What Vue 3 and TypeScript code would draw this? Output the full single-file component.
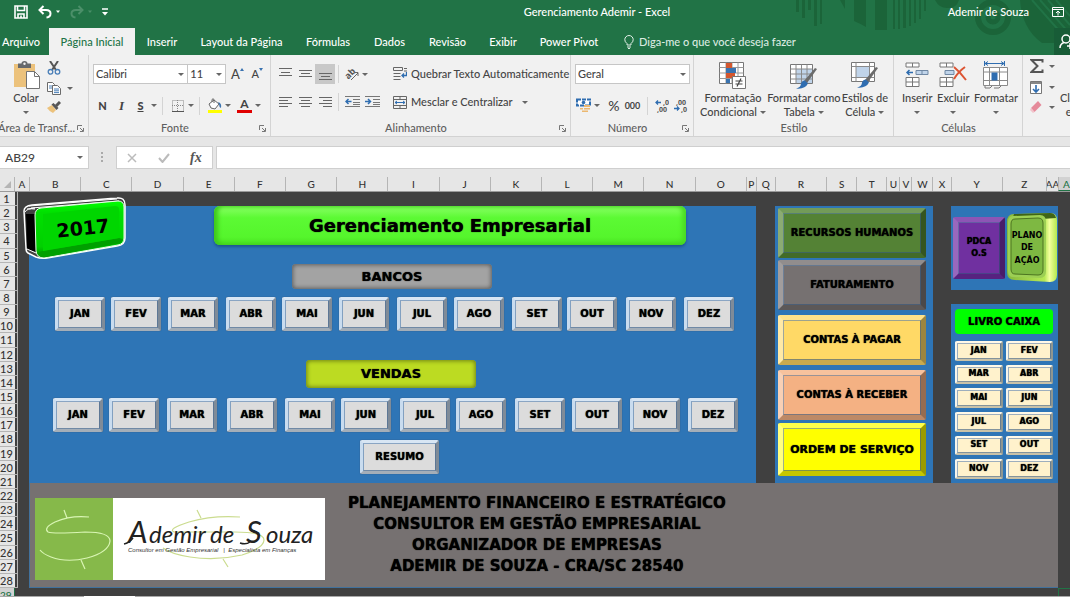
<script setup lang="ts">
import { ref } from 'vue'

interface Column { name: string; size: number; active?: boolean }
interface Area { label: string; kind: string }

const months: string[] = ['JAN', 'FEV', 'MAR', 'ABR', 'MAI', 'JUN', 'JUL', 'AGO', 'SET', 'OUT', 'NOV', 'DEZ']
const tabs: string[] = ['Arquivo', 'Página Inicial', 'Inserir', 'Layout da Página', 'Fórmulas', 'Dados', 'Revisão', 'Exibir', 'Power Pivot']
const activeTab = ref('Página Inicial')

const wide: Column[] = 'BCDEFGHIJKLMNO'.split('').map((name) => ({ name, size: 51 }))
const columns: Column[] = [
  { name: 'A', size: 14 },
  ...wide,
  { name: 'P', size: 10 },
  { name: 'Q', size: 19 },
  { name: 'R', size: 51 },
  { name: 'S', size: 30 },
  { name: 'T', size: 30 },
  { name: 'U', size: 13 },
  { name: 'V', size: 12 },
  { name: 'W', size: 21 },
  { name: 'X', size: 18 },
  { name: 'Y', size: 51 },
  { name: 'Z', size: 44 },
  { name: 'AA', size: 12 },
  { name: 'AB', size: 12, active: true },
]
const columnTracks = columns.map((c) => `minmax(0, ${c.size}fr)`).join(' ')

const areas: Area[] = [
  { label: 'RECURSOS HUMANOS', kind: 'rh' },
  { label: 'FATURAMENTO', kind: 'fat' },
  { label: 'CONTAS À PAGAR', kind: 'pagar' },
  { label: 'CONTAS À RECEBER', kind: 'receber' },
  { label: 'ORDEM DE SERVIÇO', kind: 'ordem' },
]
const slogan: string[] = [
  'PLANEJAMENTO FINANCEIRO E ESTRATÉGICO',
  'CONSULTOR EM GESTÃO EMPRESARIAL',
  'ORGANIZADOR DE EMPRESAS',
  'ADEMIR DE SOUZA - CRA/SC 28540',
]
const fontName = ref('Calibri')
const fontSize = ref('11')
const numberFormat = ref('Geral')
const cellName = ref('AB29')
const formula = ref('')
</script>

<template>
  <div class="app">
    <header class="top">
      <svg class="deco" width="290" height="55" viewBox="0 0 290 55" aria-hidden="true">
        <g fill="#1b6439">
          <path d="M16 0h3v12h-3zM22 0h3v18h-3zM28 0h3v10h-3zM34 0h3v26h-3zM40 0h2v24h-2zM60 0h5v9z" />
          <path d="M74 0h12v27q-7-4-12-6zM95 0h12v30h-12zM113 0h2v29h-2zM118 0h2v29h-2zM123 0h3v28h-3zM129 0h2v26h-2zM134 0h2v23h-2zM139 0h2v19h-2zM144 0h2v11h-2z" />
          <path d="M155 0h24q-3 9-12 8q-8 0-12-8z" />
          <path d="M240 0h50v43h-28q-20-14-22-43z" />
        </g>
        <g fill="none">
          <circle cx="213" cy="17" r="15" stroke="#1b6439" stroke-width="6" />
          <circle cx="213" cy="17" r="5" stroke="#1b6439" stroke-width="5" />
          <path d="M252 0l38 43M260 0l30 34M268 0l22 25M276 0l14 16" stroke="#217346" stroke-width="2" />
        </g>
      </svg>
      <div class="titlebar">
        <div class="quick">
          <button aria-label="Salvar">
            <svg width="14" height="14" viewBox="0 0 14 14"><path d="M1 1h12v12H1zM3.500 1v4.500h7V1M4 13V9h6v4M7 10.500V13" fill="none" stroke="#fff" stroke-width="1.600" /></svg>
          </button>
          <button aria-label="Desfazer">
            <svg width="22" height="14" viewBox="0 0 22 14"><path d="M5.500 1L1.500 5l4 4M2 5h6q4.500 0 4.500 3.500T8.500 12.500" fill="none" stroke="#fff" stroke-width="2" /><path d="M18 5.500h4l-2 2.500z" fill="#fff" /></svg>
          </button>
          <button aria-label="Refazer" disabled>
            <svg width="22" height="14" viewBox="0 0 22 14"><path d="M8.500 1l4 4-4 4M12 5H6Q1.500 5 1.500 8.500T5.500 12.500" fill="none" stroke="#4b8f69" stroke-width="2" /><path d="M18 5.500h4l-2 2.500z" fill="#4b8f69" /></svg>
          </button>
          <button aria-label="Personalizar acesso rápido">
            <svg width="6" height="8" viewBox="0 0 6 8"><path d="M0 1h6" stroke="#fff" stroke-width="1.500" /><path d="M0 4h6L3 7.500z" fill="#fff" /></svg>
          </button>
        </div>
        <h1>Gerenciamento Ademir - Excel</h1>
        <div class="user">
          <span>Ademir de Souza</span>
          <button aria-label="Opções de exibição da faixa">
            <svg width="12" height="10" viewBox="0 0 12 10"><path d="M.5.5h11v9H.5zM.5 2.500h11M6 8.500V4M4 6l2-2 2 2" fill="none" stroke="#fff" /></svg>
          </button>
        </div>
      </div>
      <nav class="tabs">
        <div class="tablist">
          <button v-for="t in tabs" :key="t" :class="{ on: t === activeTab }" @click="activeTab = t">{{ t }}</button>
        </div>
        <label class="tell">
          <svg width="10" height="14" viewBox="0 0 10 14"><path d="M3 10V8.500Q.8 7 .8 4.700A4.200 4.200 0 0 1 9.200 4.700Q9.200 7 7 8.500V10zM3 12h4M4 13.500h2" fill="none" stroke="#e3f0e8" /></svg>
          <input type="text" placeholder="Diga-me o que você deseja fazer" aria-label="Diga-me o que você deseja fazer" />
        </label>
        <button class="share" aria-label="Compartilhar">
          <svg width="14" height="15" viewBox="0 0 14 15"><circle cx="7" cy="5" r="4" fill="none" stroke="#fff" stroke-width="1.500" /><path d="M1 14q0-4 4-5.500M11 9v6M8 12h6" fill="none" stroke="#fff" stroke-width="1.500" /></svg>
        </button>
      </nav>
    </header>

    <section class="ribbon">
      <div class="group clip">
        <div class="clipbody">
          <button class="big paste">
            <svg width="26" height="28" viewBox="0 0 26 28"><path d="M0 3h21v23H0z" fill="#ecc27c" /><path d="M4 2.500h3.500q0-2.500 3-2.500t3 2.500H17V7H4z" fill="#66696c" /><circle cx="10.500" cy="2.800" r="1.200" fill="#f1f1f1" /><path d="M12.500 10.500h8l5 5v12h-13z" fill="#fff" stroke="#737373" /><path d="M20.500 10.500v5h5" fill="none" stroke="#737373" /></svg>
            <span>Colar</span><i class="arr"></i>
          </button>
          <div class="clipside">
            <button aria-label="Recortar">
              <svg width="14" height="14" viewBox="0 0 14 14"><path d="M3 0l6 9M11 0L5 9" stroke="#565656" stroke-width="2" /><circle cx="3.500" cy="10.800" r="2.300" fill="none" stroke="#4a7fb8" stroke-width="1.300" /><circle cx="10.500" cy="10.800" r="2.300" fill="none" stroke="#4a7fb8" stroke-width="1.300" /></svg>
            </button>
            <button aria-label="Copiar">
              <svg width="14" height="13" viewBox="0 0 14 13"><path d="M.5.5h5l2 2v7h-7z" fill="#fff" stroke="#6b6b6b" /><path d="M2 4h4M2 6h4" stroke="#4a7fb8" /><path d="M5.500 3.500h5l3 3v6h-8z" fill="#fff" stroke="#6b6b6b" /><path d="M7 7h5M7 8.800h5M7 10.600h5" stroke="#4a7fb8" /></svg>
              <i class="arr"></i>
            </button>
            <button aria-label="Pincel de formatação">
              <svg width="14" height="12" viewBox="0 0 14 12"><path d="M0 7l5-3 4 5-3 3q-3-1-6-5z" fill="#ecc27c" /><path d="M4.500 3.500l2-1.500 5 5-2 2z" fill="#565656" /><path d="M9 5l4-4" stroke="#565656" stroke-width="3" /></svg>
            </button>
          </div>
        </div>
        <footer><span>Área de Transf...</span><button class="launch" aria-label="Mais opções da área de transferência"><svg width="7" height="7" viewBox="0 0 7 7"><path d="M.5 5V.5H5M3 3l3 3M6.500 3v3.500H3" fill="none" stroke="#777" /></svg></button></footer>
      </div>

      <div class="group font">
        <div class="line">
          <span class="sel fname"><select v-model="fontName" aria-label="Fonte"><option>Calibri</option></select><i class="arr"></i></span>
          <span class="sel fsize"><select v-model="fontSize" aria-label="Tamanho"><option>11</option></select><i class="arr"></i></span>
          <button class="ic grow" aria-label="Aumentar fonte">A<svg width="4" height="3" viewBox="0 0 4 3"><path d="M0 3h4L2 0z" fill="#3a73b0" /></svg></button>
          <button class="ic shrink" aria-label="Diminuir fonte">A<svg width="4" height="3" viewBox="0 0 4 3"><path d="M0 0h4L2 3z" fill="#3a73b0" /></svg></button>
        </div>
        <div class="line">
          <button class="ic"><b>N</b></button>
          <button class="ic"><em>I</em></button>
          <button class="ic"><u>S</u></button>
          <i class="arr"></i><i class="sep"></i>
          <button class="ic" aria-label="Bordas"><svg width="12" height="12" viewBox="0 0 12 12"><path d="M.5.5h11v11H.5zM5.500 0v12M0 5.500h12" fill="none" stroke="#888" stroke-dasharray="1 1" /><path d="M0 11.500h12" stroke="#555" /></svg></button>
          <i class="arr"></i><i class="sep"></i>
          <button class="ic" aria-label="Cor de preenchimento"><svg width="16" height="15" viewBox="0 0 16 15"><path d="M2 6l5-4 5 4-4 5-4-1z" fill="#fff" stroke="#666" /><path d="M7 5V1.500q-1-1.500-2 0V4" fill="none" stroke="#666" /><path d="M11 4q4 1 3 6-2-1-2-4z" fill="#3a73b0" /><path d="M1 12h14v3H1z" fill="#ffff00" /></svg></button>
          <i class="arr"></i>
          <button class="ic" aria-label="Cor da fonte"><span class="fc">A</span></button>
          <i class="arr"></i>
        </div>
        <footer><span>Fonte</span><button class="launch" aria-label="Mais opções de fonte"><svg width="7" height="7" viewBox="0 0 7 7"><path d="M.5 5V.5H5M3 3l3 3M6.500 3v3.500H3" fill="none" stroke="#777" /></svg></button></footer>
      </div>

      <div class="group align">
        <div class="alignbody">
          <div>
            <div class="line">
              <button class="al" aria-label="Alinhar acima"><svg width="13" height="12" viewBox="0 0 13 12"><path d="M0 .5h13M2 4.500h9M0 7.500h13" stroke="#666" /></svg></button>
              <button class="al" aria-label="Alinhar no meio"><svg width="13" height="12" viewBox="0 0 13 12"><path d="M0 2.500h13M2 5.500h9M0 8.500h13" stroke="#666" /></svg></button>
              <button class="al on" aria-label="Alinhar abaixo"><svg width="13" height="12" viewBox="0 0 13 12"><path d="M0 5.500h13M2 8.500h9M0 11.500h13" stroke="#666" /></svg></button>
              <i class="sep"></i>
              <button class="al" aria-label="Orientação"><svg width="15" height="14" viewBox="0 0 15 14"><text x="0" y="9" transform="rotate(-45 6 7)" font-size="9" font-weight="700" font-family="Open Sans, sans-serif" fill="#555">ab</text><path d="M6 13l7-7M13 9V5.500H9.500" fill="none" stroke="#666" /></svg></button>
              <i class="arr"></i>
            </div>
            <div class="line">
              <button class="al" aria-label="Alinhar à esquerda"><svg width="13" height="11" viewBox="0 0 13 11"><path d="M0 .5h13M0 3.500h9M0 6.500h13M0 9.500h9" stroke="#666" /></svg></button>
              <button class="al" aria-label="Centralizar"><svg width="13" height="11" viewBox="0 0 13 11"><path d="M0 .5h13M2 3.500h9M0 6.500h13M2 9.500h9" stroke="#666" /></svg></button>
              <button class="al" aria-label="Alinhar à direita"><svg width="13" height="11" viewBox="0 0 13 11"><path d="M0 .5h13M4 3.500h9M0 6.500h13M4 9.500h9" stroke="#666" /></svg></button>
              <i class="sep"></i>
              <button class="al" aria-label="Diminuir recuo"><svg width="15" height="12" viewBox="0 0 15 12"><path d="M0 .5h15M8 3.500h7M8 6.500h7M0 10.500h15M8 8.500h7" stroke="#777" /><path d="M6.500 5.500H1M3.500 3L1 5.500 3.500 8" fill="none" stroke="#2f6db0" stroke-width="1.500" /></svg></button>
              <button class="al" aria-label="Aumentar recuo"><svg width="15" height="12" viewBox="0 0 15 12"><path d="M0 .5h15M8 3.500h7M8 6.500h7M0 10.500h15M8 8.500h7" stroke="#777" /><path d="M0 5.500h5.500M3 3l2.500 2.500L3 8" fill="none" stroke="#2f6db0" stroke-width="1.500" /></svg></button>
            </div>
          </div>
          <i class="vline"></i>
          <div>
            <div class="line">
              <button class="txt"><svg width="14" height="14" viewBox="0 0 14 14"><path d="M.5.5h9v3h-9zM.5 6.500h7M.5 9.500h7M.5 12.500h7M11 1.500h3M11 4h3" fill="none" stroke="#666" /><path d="M13.500 5v3.500H9M11 6.500l-2 2 2 2" fill="none" stroke="#2f6db0" stroke-width="1.300" /></svg>Quebrar Texto Automaticamente</button>
            </div>
            <div class="line">
              <button class="txt"><svg width="14" height="13" viewBox="0 0 14 13"><path d="M.5.5h13v12H.5zM.5 3.500h13M.5 9.500h13M7 .5v3M7 9.500v3" fill="none" stroke="#666" /><path d="M2 6.500h10M4 5L2 6.500 4 8M10 5l2 1.500L10 8" fill="none" stroke="#2f6db0" /></svg>Mesclar e Centralizar<i class="arr"></i></button>
            </div>
          </div>
        </div>
        <footer><span>Alinhamento</span><button class="launch" aria-label="Mais opções de alinhamento"><svg width="7" height="7" viewBox="0 0 7 7"><path d="M.5 5V.5H5M3 3l3 3M6.500 3v3.500H3" fill="none" stroke="#777" /></svg></button></footer>
      </div>

      <div class="group number">
        <div class="line"><span class="sel fnum"><select v-model="numberFormat" aria-label="Formato de número"><option>Geral</option></select><i class="arr"></i></span></div>
        <div class="line">
          <button class="ic" aria-label="Formato de contabilização"><svg width="16" height="15" viewBox="0 0 16 15"><path d="M1 1.500h13v6H1z" fill="#fff" stroke="#2f6db0" stroke-width="2" stroke-dasharray="4 1" /><circle cx="7.500" cy="4.500" r="1.800" fill="#2f6db0" /><path d="M8 7h6v2H8zM8 10h6v1.500H8zM4 10h3v1.500H4zM6 12.500h6V14H6z" fill="#ecb870" /></svg></button>
          <i class="arr"></i>
          <button class="ic pct">%</button>
          <button class="ic zeros">000</button>
          <i class="sep"></i>
          <button class="ic" aria-label="Aumentar casas decimais"><svg width="14" height="14" viewBox="0 0 14 14"><path d="M6 3.500H1M3 1.500l-2 2 2 2" fill="none" stroke="#2f6db0" stroke-width="1.300" /><text x="8" y="6" class="mini">,0</text><text x="2" y="13" class="mini">,00</text></svg></button>
          <button class="ic" aria-label="Diminuir casas decimais"><svg width="14" height="14" viewBox="0 0 14 14"><path d="M0 9.500h5M3 7.500l2 2-2 2" fill="none" stroke="#2f6db0" stroke-width="1.300" /><text x="2" y="6" class="mini">,00</text><text x="7" y="13" class="mini">,0</text></svg></button>
        </div>
        <footer><span>Número</span><button class="launch" aria-label="Mais opções de número"><svg width="7" height="7" viewBox="0 0 7 7"><path d="M.5 5V.5H5M3 3l3 3M6.500 3v3.500H3" fill="none" stroke="#777" /></svg></button></footer>
      </div>

      <div class="group style">
        <div class="bigs">
          <button class="big">
            <svg width="27" height="28" viewBox="0 0 27 28"><path d="M.5 1.500h24v21H.5z" fill="#fff" stroke="#777" /><path d="M.5 6.500h24M.5 12h24M.5 17.500h24M7 1.500v21M13 1.500v21M19 1.500v21" stroke="#999" /><path d="M7 2h6v5H7zM7 12h9v5H7z" fill="#d3572f" /><path d="M7 7h10v5H7z" fill="#3a73b0" /><path d="M7 18h4v4H7z" fill="#3a73b0" /><path d="M13.500 15.500h13v12h-13z" fill="#fff" stroke="#777" /><path d="M16.500 20h7M16.500 23h7M22 17.500l-4 8" stroke="#444" stroke-width="1.200" /></svg>
            <span>Formatação</span><span>Condicional<i class="arr"></i></span>
          </button>
          <button class="big">
            <svg width="28" height="28" viewBox="0 0 28 28"><path d="M.5 3.500h22v19H.5z" fill="#fff" stroke="#777" /><path d="M6 8h16v14H6z" fill="#c0d4ea" /><path d="M.5 8h22M.5 13h22M.5 18h22M6 3.500v19M11.500 3.500v19M17 3.500v19" stroke="#8a8a8a" /><path d="M27 8l-2-1-11 13 3 2z" fill="#6b6b6b" /><path d="M15 19.500l3 3q-3 6-12 5 5-1 5-5 1-3 4-3z" fill="#2f6db0" /></svg>
            <span>Formatar como</span><span>Tabela<i class="arr"></i></span>
          </button>
          <button class="big">
            <svg width="28" height="28" viewBox="0 0 28 28"><path d="M.5 1.500h23v19H.5z" fill="#fff" stroke="#777" /><path d="M5 6h13v10H5z" fill="#c0d4ea" /><path d="M.5 5.500h23M.5 16.500h23M5 1.500v19M18.500 1.500v19" stroke="#8a8a8a" /><path d="M27 7l-2-1-11 13 3 2z" fill="#6b6b6b" /><path d="M15 18.500l3 3q-3 6-12 5 5-1 5-5 1-3 4-3z" fill="#2f6db0" /></svg>
            <span>Estilos de</span><span>Célula<i class="arr"></i></span>
          </button>
        </div>
        <footer><span>Estilo</span></footer>
      </div>

      <div class="group cells">
        <div class="bigs">
          <button class="big">
            <svg width="24" height="28" viewBox="0 0 24 28"><path d="M1 2h13v4H1zM7.500 2v4M1 16.500h13v9H1zM1 21h13M7.500 16.500v9" fill="#fff" stroke="#777" /><path d="M11 9.500h12v4H11zM17 9.500v4" fill="#c0d4ea" stroke="#6f87a3" /><path d="M8 11.500H2M4.500 9L2 11.500 4.500 14" fill="none" stroke="#2f6db0" stroke-width="1.500" /></svg>
            <span>Inserir</span><span><i class="arr"></i></span>
          </button>
          <button class="big">
            <svg width="28" height="28" viewBox="0 0 28 28"><path d="M1 2h13v4H1zM7.500 2v4M1 16.500h13v9H1zM1 21h13M7.500 16.500v9" fill="#fff" stroke="#777" /><path d="M6 9.500h9v4H6z" fill="#c0d4ea" stroke="#6f87a3" /><path d="M15 6q6 5 12 13M26 6q-7 5-11 12" fill="none" stroke="#dc5432" stroke-width="2" /></svg>
            <span>Excluir</span><span><i class="arr"></i></span>
          </button>
          <button class="big">
            <svg width="27" height="28" viewBox="0 0 27 28"><path d="M2.500 0v5M22.500 0v5M3 2.500h19M6 .5l-3 2 3 2M19 .5l3 2-3 2" fill="none" stroke="#2f6db0" /><path d="M1.500 6.500h24v18h-24zM1.500 11h24M1.500 19.500h24M7.500 6.500v18M17.500 6.500v18" fill="#fff" stroke="#8a8a8a" /><path d="M9.500 11.500h6v8h-6z" fill="#2f6db0" /><path d="M3 25v2h5l2-2M12 27h5l2-2" fill="none" stroke="#777" /></svg>
            <span>Formatar</span><span><i class="arr"></i></span>
          </button>
        </div>
        <footer><span>Células</span></footer>
      </div>

      <div class="group edit">
        <div class="editicons">
          <button aria-label="Soma"><svg width="14" height="14" viewBox="0 0 14 14"><path d="M12.500 3.500V1H1.500l6 6-6 6h11v-2.500" fill="none" stroke="#555" stroke-width="2" /></svg><i class="arr"></i></button>
          <button aria-label="Preencher"><svg width="12" height="13" viewBox="0 0 12 13"><path d="M.5.5h11v12H.5z" fill="#fff" stroke="#777" /><path d="M1 1h10v2H1z" fill="#888" /><path d="M6 4v7M3 8l3 3 3-3" fill="none" stroke="#2f6db0" stroke-width="1.600" /></svg><i class="arr"></i></button>
          <button aria-label="Limpar"><svg width="12" height="12" viewBox="0 0 12 12"><path d="M8 0l3.500 4-7 7L1 7z" fill="#e58a9a" /><path d="M1 7l3.500 4-1.500 1-3-3z" fill="#f2c2ca" /></svg><i class="arr"></i></button>
        </div>
        <button class="big cut"><span>Classificar</span><span>e Filtrar</span></button>
      </div>
    </section>

    <section class="formula">
      <label class="namebox"><input v-model="cellName" type="text" aria-label="Caixa de nome" /><i class="arr"></i></label>
      <svg class="dots" width="2" height="11" viewBox="0 0 2 11"><path d="M0 0h2v2H0zM0 4h2v2H0zM0 8h2v2H0z" fill="#aaa" /></svg>
      <div class="fxbox">
        <button aria-label="Cancelar"><svg width="10" height="10" viewBox="0 0 10 10"><path d="M1 1l8 8M9 1L1 9" stroke="#bbb" stroke-width="1.500" /></svg></button>
        <button aria-label="Inserir"><svg width="12" height="10" viewBox="0 0 12 10"><path d="M1 5l3.500 4L11 1" fill="none" stroke="#bbb" stroke-width="2" /></svg></button>
        <button class="fx"><em>fx</em></button>
      </div>
      <input v-model="formula" class="fxinput" type="text" aria-label="Barra de fórmulas" />
    </section>

    <main class="sheet">
      <div class="cols">
        <div class="corner"><svg width="7" height="7" viewBox="0 0 7 7"><path d="M7 0v7H0z" fill="#b5b5b5" /></svg></div>
        <div class="letters" :style="{ gridTemplateColumns: columnTracks }">
          <span v-for="c in columns" :key="c.name" :class="{ active: c.active }">{{ c.name }}</span>
        </div>
      </div>

      <div class="body">
        <div class="rows"><span v-for="n in 28" :key="n">{{ n }}</span></div>
        <div class="board">
          <section class="panel main">
            <button class="year" aria-label="2017">
              <svg width="104" height="64" viewBox="0 0 104 64">
                <defs><linearGradient id="yg" x1="0" y1="0" x2="0" y2="1"><stop offset="0" stop-color="#00ff00" /><stop offset=".2" stop-color="#00e000" /><stop offset=".8" stop-color="#00d000" /><stop offset="1" stop-color="#008a00" /></linearGradient></defs>
                <path d="M9 8L94 1q8-1 8 7v33q0 7-8 8L24 61q-6 1-11-1l-8-4q-2-1-2-5L1 14q0-5 8-6z" fill="#404040" stroke="#fff" stroke-width="1.500" />
                <path d="M3 17h9l1 38-9-3z" fill="#000" />
                <path d="M2 15q2-4 10-3M4 52l9 4M4 12l8-1M6 9l88-7M8 11l88-7" stroke="#fff" fill="none" />
                <path d="M18 11L95 4q6 0 6 6v31q0 6-6 7L21 61q-7 0-8-7l-1-36q0-6 6-7z" fill="url(#yg)" stroke="#e8ffe8" />
                <path d="M19 54L96 41l4 1q-1 5-6 5L22 60q-5 0-8-4z" fill="#00a000" />
                <path d="M20 17L92 9q4 0 4 3v29l-76 13z" fill="#00d600" />
                <text x="60" y="38" transform="rotate(-6 60 32)" text-anchor="middle" class="yeartext">2017</text>
              </svg>
            </button>
            <h2 class="heading">Gerenciamento Empresarial</h2>
            <h3 class="tag bancos">BANCOS</h3>
            <div class="months b"><button v-for="m in months" :key="m" class="bevel silver">{{ m }}</button></div>
            <h3 class="tag vendas">VENDAS</h3>
            <div class="months v"><button v-for="m in months" :key="m" class="bevel silver">{{ m }}</button></div>
            <button class="bevel silver resumo">RESUMO</button>
          </section>

          <section class="panel areas">
            <button v-for="a in areas" :key="a.kind" class="bevel area" :class="a.kind">{{ a.label }}</button>
          </section>

          <div class="right">
            <section class="panel plans">
              <button class="bevel pdca"><span>PDCA</span><span>O.S</span></button>
              <button class="plano" aria-label="Plano de ação">
                <svg width="52" height="72" viewBox="0 0 52 72">
                  <defs><linearGradient id="pg" x1="0" y1="0" x2="1" y2="0"><stop offset="0" stop-color="#86b83c" /><stop offset=".75" stop-color="#b6e854" /><stop offset=".85" stop-color="#f2ff9c" /><stop offset="1" stop-color="#b4e84e" /></linearGradient></defs>
                  <path d="M8 2L44 1q7 0 7 7v55q0 7-7 7L9 68q-8 0-8-8V10q0-8 7-8z" fill="url(#pg)" />
                  <path d="M8 2L44 1q5 0 6 5L36 7q-2-3-5-3L7 5z" fill="#3f6416" />
                  <path d="M7 4L34 3q6 0 6 7v49q0 7-6 7L7 65q-5 0-5-6V10q0-6 5-6z" fill="#9ccf54" />
                  <path d="M9 7l23-1q5 0 5 5v47q0 5-5 5L9 62q-4 0-4-5V12q0-5 4-5z" fill="#7eb842" stroke="#4c7420" />
                  <text text-anchor="middle" class="planotext"><tspan x="21" y="26">PLANO</tspan><tspan x="21" y="38">DE</tspan><tspan x="21" y="51">AÇÃO</tspan></text>
                </svg>
              </button>
            </section>
            <section class="panel cash">
              <h3>LIVRO CAIXA</h3>
              <div class="cashgrid"><button v-for="m in months" :key="m" class="bevel cream">{{ m }}</button></div>
            </section>
          </div>

          <section class="brand">
            <svg class="logo" width="290" height="82" viewBox="0 0 290 82" role="img" aria-label="Ademir de Souza">
              <path d="M0 0h290v82H0z" fill="#fff" /><path d="M0 0h78v82H0z" fill="#86b94a" />
              <path d="M54 19Q36 17 20 24Q8 30 13 34Q18 36 50 34Q75 34 75 43Q74 54 52 60Q32 65 16 59Q8 56 5 52M29 12l3 8M46 62l4 9" fill="none" stroke="#d9f5b4" stroke-width="1.200" />
              <path d="M205 19Q178 17 154 24Q132 31 139 34L200 34Q229 34 229 42Q229 50 207 57Q181 63 155 59Q136 56 128 50M162 12l4 8M188 61l5 8" fill="none" stroke="#cbdc8f" stroke-width="1.200" />
              <text y="45" class="script"><tspan x="93" class="cap">A</tspan><tspan x="114">demir</tspan><tspan x="175">de</tspan><tspan x="211" class="cap">S</tspan><tspan x="231">ouza</tspan></text>
              <path d="M89 46q5-1 9-6M205 45q6 2 10-1" fill="none" stroke="#222" stroke-width="1.500" />
              <text x="93" y="54" class="sub">Consultor em Gestão Empresarial&nbsp;&nbsp; |&nbsp; Especialista em Finanças</text>
            </svg>
            <div class="slogan"><p v-for="s in slogan" :key="s">{{ s }}</p></div>
          </section>
        </div>
      </div>

      <div class="tail"><span class="row29">29</span><span class="dark"></span><span class="cursor"></span></div>
      <div class="strip"><span></span></div>
    </main>
  </div>
</template>

<style>
body { background: #404040; overflow: hidden; }
</style>

<style scoped>
* { box-sizing: border-box; }
.app { height: 100vh; min-height: 597px; display: flex; flex-direction: column; overflow: hidden; font: 500 11px/14px Lato, "Open Sans", sans-serif; color: #444; }
button { font: inherit; color: inherit; border: 0; padding: 0; background: none; white-space: nowrap; display: flex; align-items: center; justify-content: center; }
input, select { font: inherit; color: inherit; border: 0; outline: 0; min-width: 0; }
h1, h2, h3, p { margin: 0; font: inherit; }
svg { display: block; flex: none; }
.arr { flex: none; display: block; width: 0; height: 0; border: 3px solid transparent; border-top-color: #666; border-bottom: 0; }

.top { position: relative; background: #217346; color: #fff; }
.deco { position: absolute; right: 0; top: 0; }
.titlebar { position: relative; height: 28px; display: grid; grid-template-columns: 1fr auto 1fr; align-items: center; padding: 0 6px 4px 14px; }
.quick { display: flex; align-items: center; gap: 10px; }
.titlebar h1 { padding-left: 116px; }
.user { display: flex; align-items: center; justify-content: flex-end; gap: 23px; }
.tabs { position: relative; height: 27px; display: flex; }
.tablist { display: grid; grid-template-columns: 49px 86px 54px 105px 68px 55px 61px 50px 82px; }
.tablist button:first-child { padding-right: 7px; }
.tablist .on { background: #f1f1f1; color: #217346; }
.tell { display: flex; align-items: center; gap: 5px; padding-left: 14px; flex: 1; color: #e3f0e8; }
.tell input { width: 200px; background: none; padding: 0; }
.tell input::placeholder { color: #dbeae1; opacity: 1; }
.share { width: 16px; background: #185c37; overflow: hidden; justify-content: flex-start; padding-left: 5px; }

.ribbon { height: 82px; background: #f1f1f1; border-bottom: 1px solid #d2d2d2; display: flex; overflow: hidden; }
.group { flex: none; position: relative; border-right: 1px solid #d4d4d4; padding: 8px 3px 0 4px; display: flex; flex-direction: column; justify-content: space-between; }
.group footer { height: 16px; display: flex; align-items: center; color: #5f5f5f; }
.group footer span { flex: 1; text-align: center; white-space: nowrap; }
.launch { width: 10px; }
.clip { width: 89px; padding-left: 0; }
.font { width: 182px; padding-left: 4px; }
.align { width: 300px; }
.number { width: 123px; padding-left: 4px; }
.style { width: 200px; }
.cells { width: 129px; }
.edit { width: 96px; flex-direction: row; justify-content: flex-start; gap: 7px; border: 0; padding: 4px 0 0 7px; }
.line { height: 22px; display: flex; align-items: center; }
.line + .line { margin-top: 6px; }
.clipbody { display: flex; gap: 7px; margin-top: -2px; height: 58px; }
.clip footer span { text-align: left; margin-left: -2px; }
.big { flex-direction: column; justify-content: flex-start; align-items: center; }
.big svg { margin-bottom: 2px; height: 28px; }
.big span { display: flex; align-items: center; gap: 3px; height: 14px; line-height: 14px; }
.paste { width: 40px; margin-left: 6px; }
.paste .arr { margin-top: 6px; }
.paste svg { margin-left: 2px; }
.clipside { display: flex; flex-direction: column; justify-content: space-between; height: 52px; margin-left: -6px; }
.clipside button { gap: 6px; justify-content: flex-start; }
.sel { position: relative; display: flex; height: 20px; }
.sel select { appearance: none; width: 100%; background: #fff; border: 1px solid #c6c6c6; padding: 0 2px; }
.sel .arr { position: absolute; right: 4px; top: 9px; }
.fname { width: 97px; }
.fsize { width: 39px; margin-left: -1px; }
.fnum { width: 116px; }
.ic { width: 19px; height: 20px; }
.grow, .shrink { align-items: center; width: 20px; }
.grow { font-size: 13px; margin-left: 2px; }
.grow svg, .shrink svg { margin-bottom: 9px; }
.ic b { font-weight: 900; }
.ic em { font-family: "Liberation Serif", serif; font-size: 13px; font-weight: 700; }
.ic u { font-weight: 900; }
.sep { flex: none; width: 1px; height: 18px; background: #d4d4d4; margin: 0 5px; }
.fc { font-weight: 700; font-size: 12px; line-height: 12px; border-bottom: 3px solid #e00000; padding: 0 3px; }
.font .ic + .arr { margin-left: 1px; }
.font .ic + .arr + .ic { margin-left: 4px; }
.alignbody { display: flex; gap: 6px; }
.al { width: 20px; height: 20px; }
.al.on { background: #c8c8c8; }
.alignbody .sep { margin: 0 3px; }
.vline { width: 1px; height: 48px; background: #d8d8d8; margin-left: -1px; }
.txt { gap: 4px; }
.txt .arr { margin-left: 5px; }
.pct { font-size: 14px; margin-left: 5px; }
.zeros { font-size: 9px; font-weight: 700; }
.mini { font: 700 7px "Open Sans", sans-serif; fill: #555; }
.bigs { display: flex; justify-content: space-between; margin-top: -2px; height: 58px; }
.cells .bigs { padding: 0 1px 0 4px; }
.style .bigs { padding: 0 2px; }
.editicons { display: flex; flex-direction: column; justify-content: space-between; height: 54px; }
.editicons button { width: 25px; justify-content: space-between; }
.cut { padding-top: 32px; align-items: center; margin-left: -2px; }

.formula { height: 40px; flex: none; background: #e6e6e6; display: flex; align-items: flex-start; padding-top: 9px; font-size: 12px; }
.namebox, .fxbox, .fxinput { height: 23px; background: #fff; border: 1px solid #cfcfcf; display: flex; align-items: center; }
.namebox { width: 89px; border-left: 0; padding: 0 5px; }
.namebox input { flex: 1; padding: 0; }
.dots { margin: 6px 13px 0 12px; }
.fxbox { width: 97px; justify-content: space-around; }
.fx { font: 700 14px/16px "Liberation Serif", serif; color: #555; }
.fxinput { flex: 1; margin-left: 3px; border-right: 0; }

.sheet { flex: 1; display: flex; flex-direction: column; background: #404040; min-height: 0; }
.cols { height: 15px; flex: none; display: flex; background: #e6e6e6; border-bottom: 1px solid #9a9a9a; color: #333; }
.corner { width: 15px; display: flex; align-items: flex-end; justify-content: flex-end; padding: 0 3px 3px 0; border-right: 1px solid #b5b5b5; }
.letters { flex: 1; display: grid; font-size: 10px; line-height: 14px; }
.letters span { text-align: center; border-left: 1px solid #b5b5b5; overflow: hidden; display: flex; justify-content: center; }
.letters span:first-child { border-left: 0; }
.letters .active { background: #d2d2d2; color: #217346; border-bottom: 1px solid #217346; justify-content: flex-start; padding-left: 4px; }
.body { display: flex; flex: none; }
.rows { width: 15px; flex: none; background: #e6e6e6; display: grid; grid-template-rows: repeat(28, minmax(0, 1fr)); font-size: 11px; line-height: 13px; color: #333; }
.rows span { display: flex; justify-content: center; padding-right: 4px; border-bottom: 1px solid #b5b5b5; border-right: 1px solid #b5b5b5; }
.board { flex: 1; padding-top: 14px; display: grid; grid-template-columns: 14fr 727fr 19fr 158fr 18fr 107fr 12fr; grid-template-rows: auto auto; font-family: "DejaVu Sans", "Liberation Sans", sans-serif; font-weight: 700; color: #000; text-shadow: 0 0 1px #000; }
.panel { background: #2e75b6; }
.main { grid-column: 2; position: relative; height: 277px; display: flex; flex-direction: column; align-items: flex-start; }
.year { position: absolute; left: -6px; top: -9px; }
.yeartext { font: 700 19px "DejaVu Sans", sans-serif; }
.heading { width: 472px; height: 39px; margin-left: 185px; border-radius: 6px; font-size: 18px; font-weight: 700; display: flex; align-items: center; justify-content: center; background: linear-gradient(#8aff66, #5cfa34 30%, #55f52c 80%, #48e020); box-shadow: inset 4px 0 4px #3fc81c, inset -4px 0 4px #4bdc24, 0 2px 3px #1d568c; }
.tag { display: flex; align-items: center; justify-content: center; border-radius: 4px; font-size: 13px; font-weight: 700; }
.bancos { width: 200px; height: 25px; margin: 19px 0 0 263px; background: #a3a3a3; box-shadow: inset 0 0 4px 1px #5c5c5c; }
.vendas { width: 170px; height: 28px; margin: 29px 0 0 277px; background: #bcdb22; box-shadow: inset 0 0 4px 1px #6d8112; }
.months { display: grid; }
.months.b { margin: 8px 0 0 26px; grid-template-columns: 56px 57px 58px 56px 57px 58px 57px 58px 55px 59px 58px 50px; }
.months.v { margin: 10px 0 0 24px; grid-template-columns: 56px 58px 60px 58px 56px 59px 56px 59px 57px 58px 58px 50px; }
.bevel { border: 4px solid; font-weight: 700; border-radius: 2px; outline: 1px solid rgba(60, 100, 145, .5); outline-offset: -4px; text-shadow: inherit; }
.silver { width: 50px; height: 34px; background: #dcdcdc; border-color: #d8e6f4 #7f8b98 #a4aeb8 #c9dcef; font-size: 10px; box-shadow: 0 0 1px #345; }
.resumo { width: 79px; margin: 8px 0 0 331px; }
.areas { grid-column: 4; padding: 2px 7px 0 3px; display: grid; grid-template-rows: 52px 55px 55px 53px 53px; align-content: start; }
.area { height: 50px; border-width: 6px; outline-offset: -6px; font-size: 10px; }
.rh { background: #548235; border-color: #739b59 #35551f #426b28 #8bab73; }
.fat { background: #767171; border-color: #918d8d #4b4848 #5c5858 #a19d9d; }
.pagar { background: #ffd966; border-color: #ffe28a #9c853f #c9aa4d #ffe9a6; }
.receber { background: #f4b183; border-color: #f7c29d #966c50 #bd8966 #f8d0b5; }
.ordem { height: 53px; background: #ffff00; border-color: #ffff4a #9b9b00 #c7c700 #ffff80; font-size: 11px; }
.right { grid-column: 6; display: flex; flex-direction: column; gap: 14px; }
.plans { height: 84px; display: flex; align-items: center; justify-content: space-between; padding-left: 2px; }
.pdca { flex-direction: column; width: 52px; height: 62px; border-width: 6px; outline-offset: -6px; background: #7030a0; border-color: #8d55b5 #481c69 #572280 #9868bd; font-size: 8px; line-height: 12px; }
.planotext { font: 700 8px "DejaVu Sans", sans-serif; }
.cash { flex: 1; padding: 5px 5px 4px 4px; display: flex; flex-direction: column; }
.cash h3 { height: 25px; border-radius: 4px; background: #00ff00; font-size: 10px; font-weight: 700; display: flex; align-items: center; justify-content: center; }
.cashgrid { flex: 1; margin-top: 7px; display: grid; grid-template-columns: 1fr 1fr; gap: 4px 3px; }
.cream { border-width: 3px; outline-offset: -3px; background: #fff2cc; border-color: #fff9e8 #8f9690 #c9c2a8 #f6f5ec; font-size: 8px; line-height: 10px; }
.brand { grid-column: 2 / 7; height: 105px; background: #767171; border: solid #41719c; border-width: 0 0 1px 1px; display: flex; align-items: center; padding: 8px 0 0 5px; }
.slogan { margin: 0 0 8px 23px; font-size: 15px; line-height: 21px; text-align: center; }
.slogan p { font-weight: 700; }
.logo { text-shadow: none; }
.script { font: italic 400 24px Lato, sans-serif; fill: #222; }
.cap { font-size: 31px; }
.sub { font: italic 400 6px "Liberation Sans", sans-serif; fill: #333; }
.tail { flex: 1; min-height: 0; display: flex; overflow: hidden; }
.row29 { width: 15px; background: #d2d2d2; color: #217346; border-right: 1px solid #217346; font-size: 10px; line-height: 14px; }
.dark { flex: 1; }
.cursor { width: 12px; border: solid #217346; border-width: 1px 0 0 1px; }
.strip { height: 1px; flex: none; background: #a8a8a8; padding-left: 84px; }
.strip span { display: block; width: 51px; height: 1px; background: #fff; }
</style>
